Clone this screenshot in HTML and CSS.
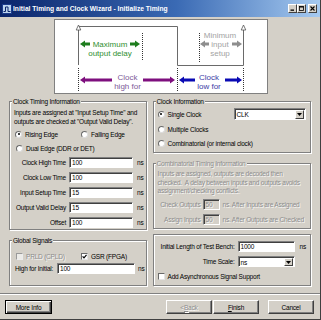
FILE: index.html
```html
<!DOCTYPE html>
<html>
<head>
<meta charset="utf-8">
<title>Initial Timing and Clock Wizard</title>
<link rel="stylesheet" href="styles.css">
</head>
<body>
<div class="window">
  <div class="titlebar">
    <svg class="appicon" width="10" height="10" viewBox="0 0 10 10">
      <rect x="0.5" y="0.5" width="9" height="9" fill="#bcd4ee" stroke="#1c3c8c"/>
      <path d="M1.5,7.5 H3.5 V3 H6 V7.5 H8.5" fill="none" stroke="#0a246a" stroke-width="1"/>
    </svg>
    <span class="title">Initial Timing and Clock Wizard - Initialize Timing</span>
    <div class="tbtns">
      <span class="tbtn"><svg width="5" height="5" viewBox="0 0 5 5"><rect x="0.5" y="3.5" width="3.5" height="1.3" fill="#000"/></svg></span>
      <span class="tbtn"><svg width="5" height="5" viewBox="0 0 5 5"><rect x="0.5" y="0.5" width="4" height="4" fill="none" stroke="#000" stroke-width="0.8"/><rect x="0.5" y="0.5" width="4" height="1" fill="#000"/></svg></span>
      <span class="tbtn close"><svg width="5" height="5" viewBox="0 0 5 5"><path d="M0.5,0.5 L4.5,4.5 M4.5,0.5 L0.5,4.5" stroke="#000" stroke-width="1.1"/></svg></span>
    </div>
  </div>

  <div class="diagram">
    <svg width="212" height="73" viewBox="0 0 212 73">
      <g fill="none" stroke="#6a6a6a" stroke-width="1">
        <path d="M23.5,45 V10"/>
        <path d="M23.5,6.5 H122.5 V45.5 H188.5 V10"/>
      </g>
      <g fill="#fff" stroke="#555" stroke-width="0.8">
        <polygon points="23.5,5 21.2,10 25.8,10"/>
        <polygon points="188.5,5 186.2,10 190.8,10"/>
      </g>
      <g stroke="#333" stroke-width="1" stroke-dasharray="1 1">
        <path d="M87.5,13 V40"/>
        <path d="M144.5,13 V43"/>
        <path d="M23.5,48 V71"/>
        <path d="M122.5,48 V71"/>
        <path d="M188.5,48 V71"/>
      </g>
      <g>
        <path d="M29,24 H35 M75,24 H81" stroke="#1e7d1e" stroke-width="3"/>
        <polygon points="25,24 30,20.5 30,27.5" fill="#1e7d1e"/>
        <polygon points="85,24 80,20.5 80,27.5" fill="#1e7d1e"/>
      </g>
      <g>
        <path d="M149,24 H154 M177,24 H183" stroke="#8e8e8e" stroke-width="3"/>
        <polygon points="145,24 150,20.5 150,27.5" fill="#8e8e8e"/>
        <polygon points="187,24 182,20.5 182,27.5" fill="#8e8e8e"/>
      </g>
      <g>
        <path d="M29,60 H57 M88,60 H116" stroke="#7e0f7e" stroke-width="3"/>
        <polygon points="25,60 30,56.5 30,63.5" fill="#7e0f7e"/>
        <polygon points="120,60 115,56.5 115,63.5" fill="#7e0f7e"/>
      </g>
      <g>
        <path d="M128,60 H140 M170,60 H183" stroke="#0a0ab4" stroke-width="3"/>
        <polygon points="124,60 129,56.5 129,63.5" fill="#0a0ab4"/>
        <polygon points="187,60 182,56.5 182,63.5" fill="#0a0ab4"/>
      </g>
      <g class="dtext" text-anchor="middle">
        <text x="55" y="26.5" fill="#2f8f2f">Maximum</text>
        <text x="55" y="35.5" fill="#2f8f2f">output delay</text>
        <text x="165" y="17.5" fill="#a3a3a3">Minimum</text>
        <text x="165" y="26.5" fill="#a3a3a3">input</text>
        <text x="165" y="35.5" fill="#a3a3a3">setup</text>
        <text x="72.5" y="60" fill="#7d5a98">Clock</text>
        <text x="72.5" y="69" fill="#7d5a98">high for</text>
        <text x="154" y="60" fill="#3c3ca6">Clock</text>
        <text x="154" y="69" fill="#3c3ca6">low for</text>
      </g>
    </svg>
  </div>

  <div class="groups">
    <div class="col col-left">
      <div class="group g-timing">
        <span class="legend">Clock Timing Information</span>
        <p class="desc">Inputs are assigned at "Input Setup Time" and<br>outputs are checked at "Output Valid Delay".</p>
        <div class="optrow r1">
          <span class="opt opt-rising"><span class="radio on"></span>Rising Edge</span>
          <span class="opt"><span class="radio"></span>Falling Edge</span>
        </div>
        <div class="optrow r2">
          <span class="opt opt-dual"><span class="radio"></span>Dual Edge (DDR or DET)</span>
        </div>
        <div class="fields">
          <span class="lbl">Clock High Time</span><span class="field">100</span><span class="unit">ns</span>
          <span class="lbl">Clock Low Time</span><span class="field">100</span><span class="unit">ns</span>
          <span class="lbl">Input Setup Time</span><span class="field">15</span><span class="unit">ns</span>
          <span class="lbl">Output Valid Delay</span><span class="field">15</span><span class="unit">ns</span>
          <span class="lbl">Offset</span><span class="field">100</span><span class="unit">ns</span>
        </div>
      </div>
      <div class="group g-global">
        <span class="legend">Global Signals</span>
        <div class="optrow">
          <span class="opt opt-prld disabled"><span class="check off"></span>PRLD (CPLD)</span>
          <span class="opt"><span class="check"><svg width="5" height="5" viewBox="0 0 5 5"><path d="M0.6,2.3 L2,3.8 L4.5,0.9" fill="none" stroke="#000" stroke-width="1.2"/></svg></span>GSR (FPGA)</span>
        </div>
        <div class="hirow">
          <span class="hilbl">High for Initial:</span><span class="field hifield">100</span><span class="unit hiunit">ns</span>
        </div>
      </div>
    </div>

    <div class="col col-right">
      <div class="group g-clock">
        <span class="legend">Clock Information</span>
        <div class="optrow row-single">
          <span class="opt opt-single"><span class="radio on"></span>Single Clock</span>
          <span class="combo combo-clk"><span class="combo-val">CLK</span><span class="combo-btn"><svg width="5" height="3" viewBox="0 0 5 3"><polygon points="0,0 5,0 2.5,3" fill="#000"/></svg></span></span>
        </div>
        <div class="optrow r-right">
          <span class="opt"><span class="radio"></span>Multiple Clocks</span>
        </div>
        <div class="optrow r-right">
          <span class="opt"><span class="radio"></span>Combinatorial (or internal clock)</span>
        </div>
      </div>
      <div class="group g-comb disabled">
        <span class="legend">Combinatorial Timing Information</span>
        <p class="desc">Inputs are assigned, outputs are decoded then<br>checked.&nbsp; A delay between inputs and outputs avoids<br>assignment/checking conflicts.</p>
        <div class="combfields">
          <span class="lbl">Check Outputs</span><span class="field off">50</span><span class="unit">ns. After Inputs are Assigned</span>
          <span class="lbl">Assign Inputs</span><span class="field off">50</span><span class="unit">ns. After Outputs are Checked</span>
        </div>
      </div>
      <div class="group g-init">
        <div class="initfields">
          <span class="lbl">Initial Length of Test Bench:</span><span class="field">1000</span><span class="unit">ns</span>
          <span class="lbl">Time Scale:</span><span class="combo"><span class="combo-val">ns</span><span class="combo-btn"><svg width="5" height="3" viewBox="0 0 5 3"><polygon points="0,0 5,0 2.5,3" fill="#000"/></svg></span></span><span></span>
        </div>
        <div class="optrow r-async">
          <span class="opt"><span class="check"></span>Add Asynchronous Signal Support</span>
        </div>
      </div>
    </div>
  </div>

  <div class="sep"></div>

  <div class="buttons">
    <span class="btn btn-default">More Info</span>
    <span class="spacer"></span>
    <span class="btn btn-disabled">&lt; <u>B</u>ack</span>
    <span class="btn btn-finish"><u>F</u>inish</span>
    <span class="btn btn-cancel">Cancel</span>
  </div>
</div>
</body>
</html>
```

FILE: styles.css
```css
* { box-sizing: border-box; }
html, body { margin: 0; padding: 0; }
body {
  width: 321px;
  height: 320px;
  overflow: hidden;
  background: #d4d0c8;
  font-family: "Liberation Sans", Arial, sans-serif;
  font-size: 6.5px;
  letter-spacing: -0.2px;
  color: #000;
}
.window {
  width: 321px;
  height: 320px;
  display: flex;
  flex-direction: column;
  background: #d4d0c8;
  border-right: 1px solid #404040;
  border-bottom: 1px solid #404040;
}

/* title bar */
.titlebar {
  flex: none;
  height: 17px;
  display: flex;
  align-items: center;
  padding: 0 3px 0 2px;
  background: linear-gradient(90deg, #0a246a 0%, #3a6ab4 55%, #a6caf0 100%);
}
.appicon { flex: none; }
.title {
  flex: 1;
  margin-left: 1px;
  color: #fff;
  font-weight: bold;
  font-size: 6.7px;
  letter-spacing: 0;
  white-space: nowrap;
}
.tbtns { display: flex; }
.tbtn {
  width: 9px;
  height: 9px;
  display: flex;
  align-items: center;
  justify-content: center;
  background: #d4d0c8;
  border: 1px solid;
  border-color: #fff #404040 #404040 #fff;
}
.tbtn.close { margin-left: 2px; }

/* diagram */
.diagram {
  flex: none;
  align-self: flex-start;
  margin: 2px 0 0 54px;
  width: 214px;
  height: 75px;
  background: #fff;
  border: 1px solid #808080;
}
.diagram svg { display: block; }
.dtext { font-family: "Liberation Sans", Arial, sans-serif; font-size: 8px; letter-spacing: 0; }

/* group layout */
.groups {
  flex: none;
  display: flex;
  gap: 6px;
  padding: 0 9px;
  margin-top: 7px;
}
.col { display: flex; flex-direction: column; }
.col-left { width: 138px; }
.col-right { width: 159px; }
.group {
  position: relative;
  flex: none;
  border: 1px solid #808080;
  box-shadow: inset 1px 1px #fff, 1px 1px #fff;
}
.legend {
  position: absolute;
  top: -4.5px;
  left: 2px;
  padding: 0 1px;
  line-height: 8px;
  background: #d4d0c8;
  white-space: nowrap;
}
.desc { margin: 0; line-height: 8.5px; white-space: nowrap; }

.optrow { display: flex; align-items: center; height: 10px; }
.opt { display: flex; align-items: center; gap: 3px; white-space: nowrap; }

.radio {
  position: relative;
  flex: none;
  width: 7px;
  height: 7px;
  border-radius: 50%;
  background: #fff;
  border: 1px solid;
  border-color: #6a6a6a #dcdcdc #dcdcdc #6a6a6a;
}
.radio.on::after {
  content: "";
  position: absolute;
  left: 1.5px;
  top: 1.5px;
  width: 2px;
  height: 2px;
  border-radius: 50%;
  background: #000;
}
.check {
  flex: none;
  width: 7px;
  height: 7px;
  display: flex;
  align-items: center;
  justify-content: center;
  background: #fff;
  border: 1px solid;
  border-color: #6a6a6a #e4e4e4 #e4e4e4 #6a6a6a;
}
.check.off { background: #ecebe8; border-color: #9a9a9a #ececec #ececec #9a9a9a; }

.field {
  height: 11px;
  display: flex;
  align-items: center;
  padding-left: 2px;
  background: #fff;
  border: 1px solid;
  border-color: #808080 #fff #fff #808080;
  box-shadow: inset 1px 1px #404040;
  white-space: nowrap;
}
.field.off { background: #d4d0c8; }
.lbl { text-align: right; white-space: nowrap; }
.unit { white-space: nowrap; }

/* clock timing group */
.g-timing { height: 129px; padding: 7px 0 0 4px; }
.r1 { margin-top: 3px; }
.r2 { margin-top: 4px; }
.opt-rising { width: 66px; margin-left: 1px; }
.opt-dual { margin-left: 2px; }
.fields {
  display: grid;
  grid-template-columns: 52px 64px auto;
  grid-auto-rows: 11px;
  column-gap: 3px;
  row-gap: 4px;
  align-items: center;
  margin-top: 4px;
}
.fields .unit { margin-left: 1px; }

/* global signals */
.g-global { height: 46px; margin-top: 10px; padding: 10px 0 0 6px; }
.opt-prld { width: 65px; }
.disabled { color: #8c8c8c; text-shadow: 1px 1px rgba(255, 255, 255, 0.85); }
.hirow { display: flex; align-items: center; height: 11px; margin: 2px 0 0 -1px; }
.hilbl { width: 42px; white-space: nowrap; }
.hifield { width: 78px; }
.hiunit { margin-left: 3px; }

/* clock information */
.g-clock { height: 52px; padding: 6px 0 0 4px; }
.row-single { height: 12px; }
.opt-single { width: 76px; }
.r-right { margin-top: 4px; }
.combo {
  height: 11px;
  display: flex;
  align-items: center;
  background: #fff;
  border: 1px solid;
  border-color: #808080 #fff #fff #808080;
  box-shadow: inset 1px 1px #404040;
  padding: 1px 1px 0 2px;
}
.combo-clk { width: 72px; height: 12px; }
.combo-val { flex: 1; }
.combo-btn {
  flex: none;
  width: 9px;
  height: 100%;
  display: flex;
  align-items: center;
  justify-content: center;
  background: #d4d0c8;
  border: 1px solid;
  border-color: #fff #404040 #404040 #fff;
}

/* combinatorial */
.g-comb { height: 66px; margin-top: 10px; padding: 6px 0 0 4px; }
.combfields {
  display: grid;
  grid-template-columns: 43px 17px auto;
  grid-auto-rows: 11px;
  column-gap: 2px;
  row-gap: 4px;
  align-items: center;
  margin-top: 3px;
}
.combfields .unit { margin-left: 1px; }

/* init */
.g-init { height: 52px; margin-top: 5px; padding: 6px 0 0 4px; }
.initfields {
  display: grid;
  grid-template-columns: 77px 57px auto;
  grid-auto-rows: 11px;
  column-gap: 3px;
  row-gap: 4px;
  align-items: center;
}
.initfields .unit { margin-left: 2px; }
.r-async { height: 9px; margin-top: 4.5px; }

/* bottom */
.sep {
  flex: none;
  height: 2px;
  margin-top: 7px;
  border-top: 1px solid #808080;
  border-bottom: 1px solid #fff;
}
.buttons {
  flex: none;
  display: flex;
  align-items: center;
  margin-top: 5px;
  padding: 0 6px 0 5px;
}
.spacer { flex: 1; }
.btn {
  width: 46px;
  height: 14px;
  display: flex;
  align-items: center;
  justify-content: center;
  background: #d4d0c8;
  border: 1px solid;
  border-color: #fff #404040 #404040 #fff;
  box-shadow: inset -1px -1px #808080;
  white-space: nowrap;
}
.btn-default {
  width: 47px;
  border-color: #000;
  box-shadow: inset 1px 1px #fff, inset -1px -1px #404040, inset -2px -2px #808080;
}
.btn-disabled { color: #8c8c8c; text-shadow: 1px 1px #fff; }
.btn-finish { margin-left: 1px; }
.btn-cancel { margin-left: 9px; }
```
